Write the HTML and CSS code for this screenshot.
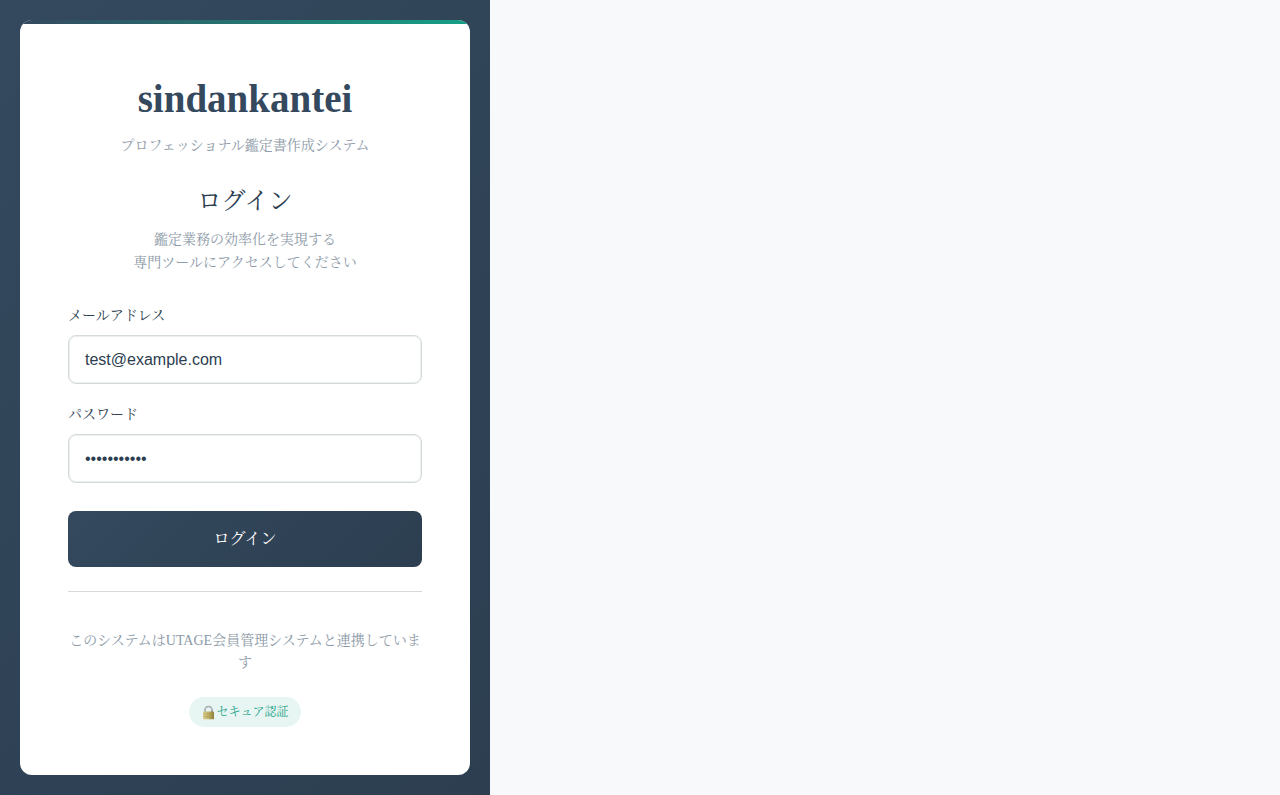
FILE: index.html
```html
<!DOCTYPE html>
<html lang="ja">
<head>
<meta charset="utf-8">
<title>sindankantei ログイン</title>
<link rel="stylesheet" href="styles.css">
</head>
<body>
<div class="login-page">
  <main class="card">
    <header class="brand">
      <h1 class="brand-name">sindankantei</h1>
      <p class="brand-tagline">プロフェッショナル鑑定書作成システム</p>
    </header>
    <section class="intro">
      <h2 class="intro-title">ログイン</h2>
      <p class="intro-text">鑑定業務の効率化を実現する<br>専門ツールにアクセスしてください</p>
    </section>
    <form class="form">
      <div class="field">
        <label class="label" for="email">メールアドレス</label>
        <input class="input" id="email" type="email" value="test@example.com">
      </div>
      <div class="field">
        <label class="label" for="password">パスワード</label>
        <input class="input" id="password" type="password" value="password123">
      </div>
      <button class="submit" type="button">ログイン</button>
    </form>
    <footer class="footer">
      <p class="footer-text">このシステムはUTAGE会員管理システムと連携しています</p>
      <div class="badge">
        <svg class="lock" viewBox="0 0 15 15" aria-hidden="true">
          <defs>
            <linearGradient id="lock-body" x1="0" y1="0" x2="1" y2="0">
              <stop offset="0" stop-color="#d9d08f"/>
              <stop offset="0.5" stop-color="#c0b165"/>
              <stop offset="1" stop-color="#8d7d38"/>
            </linearGradient>
          </defs>
          <path d="M4 8V5a3.5 3.5 0 0 1 7 0v3" fill="none" stroke="#959da0" stroke-width="1.6"/>
          <path d="M4 7V5a3.5 3.5 0 0 1 7 0" fill="none" stroke="#c5cacb" stroke-width="0.6"/>
          <rect x="2" y="6.4" width="11" height="7.8" rx="0.8" fill="url(#lock-body)"/>
          <path d="M2.5 9h10M2.5 11.6h10" stroke="#a79850" stroke-width="0.5"/>
        </svg>
        <span>セキュア認証</span>
      </div>
    </footer>
  </main>
</div>
</body>
</html>
```
FILE: styles.css
```css
* { box-sizing: border-box; margin: 0; padding: 0; }
body {
  font-family: "Liberation Serif", "Noto Serif CJK JP", "Noto Serif JP", serif;
  line-height: 1.6;
  color: #2c3e50;
  background: #f8f9fb;
}
.login-page {
  display: flex;
  align-items: center;
  width: fit-content;
  min-height: 100vh;
  padding: 20px;
  background: linear-gradient(135deg, #34495e 0%, #2c3e50 100%);
}
.card {
  position: relative;
  width: 100%;
  max-width: 450px;
  padding: 48px;
  overflow: hidden;
  border-radius: 12px;
  background: #fff;
}
.card::before {
  content: "";
  position: absolute;
  top: 0;
  left: 0;
  right: 0;
  height: 4px;
  background: linear-gradient(90deg, #34495e, #16a085);
}
.brand, .intro { text-align: center; }
.brand { margin-bottom: 25px; }
.brand-name { margin-bottom: 4px; font-size: 39px; line-height: 62px; font-weight: 700; color: #34495e; }
.brand-tagline, .intro-text { font-size: 14px; line-height: 23px; color: #8d9aa8; }
.intro { margin-bottom: 31px; }
.intro-title { margin-bottom: 8px; font-size: 24px; line-height: 38px; font-weight: 400; }
.field { margin-bottom: 20px; }
.label { display: block; margin-bottom: 8px; font-size: 14px; line-height: 22px; font-weight: 400; }
.input {
  display: block;
  width: 100%;
  padding: 13px 16px;
  border: 1px solid #d5dbdb;
  border-radius: 8px;
  box-shadow: inset 0 0 0 1px #eceff0;
  font: 16px/21px "Liberation Sans", Arial, sans-serif;
  color: #2c3e50;
  background: #fff;
}
.submit {
  display: block;
  width: 100%;
  margin-top: 28px;
  padding: 15px 16px;
  border: 0;
  border-radius: 8px;
  font-family: inherit;
  font-size: 16px;
  line-height: 26px;
  color: #fff;
  background: linear-gradient(135deg, #34495e, #2c3e50);
}
.footer { margin-top: 24px; padding-top: 38px; border-top: 1px solid #d9d9d9; text-align: center; }
.footer-text { margin-bottom: 23px; font-size: 14px; line-height: 22px; color: #8d9aa8; }
.badge {
  display: flex;
  align-items: center;
  width: fit-content;
  margin: 0 auto;
  padding: 5px 12px;
  border-radius: 20px;
  font-size: 12px;
  line-height: 20px;
  color: #16a085;
  background: #e8f6f3;
}
.lock { width: 15px; height: 15px; }
```
